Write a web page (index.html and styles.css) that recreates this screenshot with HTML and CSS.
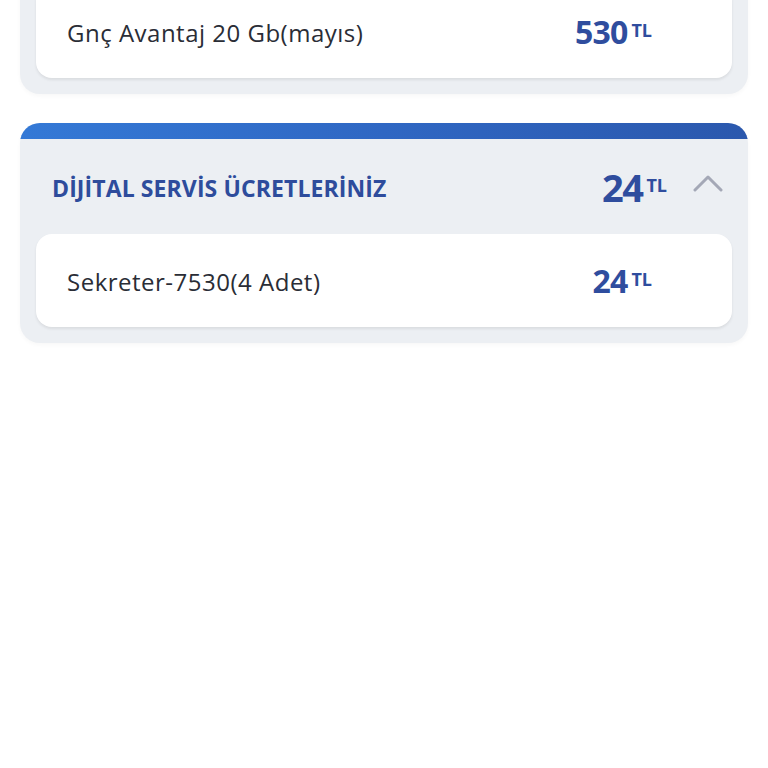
FILE: index.html
```html
<!DOCTYPE html>
<html lang="tr">
<head>
<meta charset="utf-8">
<link rel="stylesheet" href="styles.css">
</head>
<body>
<div class="page">
  <section class="panel panel-first">
    <div class="card">
      <span class="item-name">Gnç Avantaj 20 Gb(mayıs)</span>
      <span class="price"><span class="amount">530</span><span class="cur">TL</span></span>
    </div>
  </section>

  <section class="panel panel-open">
    <div class="stripe"></div>
    <div class="panel-head">
      <span class="title">DİJİTAL SERVİS ÜCRETLERİNİZ</span>
      <span class="price head-price"><span class="amount">24</span><span class="cur">TL</span></span>
      <svg class="chev" width="30" height="18" viewBox="0 0 30 18"><path d="M2 16 L15 3 L28 16" fill="none" stroke="#a4a8b6" stroke-width="3" stroke-linecap="round" stroke-linejoin="round"/></svg>
    </div>
    <div class="card">
      <span class="item-name">Sekreter-7530(4 Adet)</span>
      <span class="price"><span class="amount">24</span><span class="cur">TL</span></span>
    </div>
  </section>
</div>
</body>
</html>
```

FILE: styles.css
```css
html, body {
  margin: 0;
  padding: 0;
  background: #ffffff;
}
body {
  font-family: "Open Sans", "Noto Sans", sans-serif;
  width: 768px;
  height: 768px;
  overflow: hidden;
}
.page {
  display: flex;
  flex-direction: column;
  gap: 29px;
  padding: 0 20px;
  margin-top: -31px;
}
.panel {
  background: #eceff3;
  border-radius: 20px;
  padding: 0 16px 16px;
  overflow: hidden;
  box-shadow: 0 2px 4px rgba(0,0,0,0.03);
}
.panel-first {
  padding-top: 16px;
}
.stripe {
  height: 16px;
  margin: 0 -16px;
  background: linear-gradient(90deg, #3479d6 0%, #2f67c3 50%, #2b58ad 100%);
}
.panel-head {
  height: 95px;
  display: flex;
  align-items: center;
  padding: 0 0 0 16px;
}
.title {
  flex: 1;
  color: #2e4c9c;
  font-weight: 700;
  font-size: 23px;
  letter-spacing: 0.1px;
  padding-top: 2px;
}
.card {
  background: #ffffff;
  border-radius: 16px;
  height: 93px;
  display: flex;
  align-items: center;
  padding: 0 80px 0 31px;
  box-shadow: 0 2px 3px rgba(0,0,0,0.08);
}
.item-name {
  flex: 1;
  color: #2a2d36;
  font-size: 24px;
  letter-spacing: 0.5px;
  padding-top: 2px;
}
.price {
  color: #2f4d9e;
  font-weight: 700;
  display: flex;
  align-items: center;
}
.amount {
  font-size: 32px;
  letter-spacing: -0.8px;
}
.cur {
  font-size: 18px;
  margin-left: 4px;
  margin-top: -4px;
}
.head-price .amount {
  font-size: 38px;
  letter-spacing: -1.5px;
}
.chev {
  margin-left: 26px;
  margin-right: 9px;
  margin-top: -8px;
}
```
